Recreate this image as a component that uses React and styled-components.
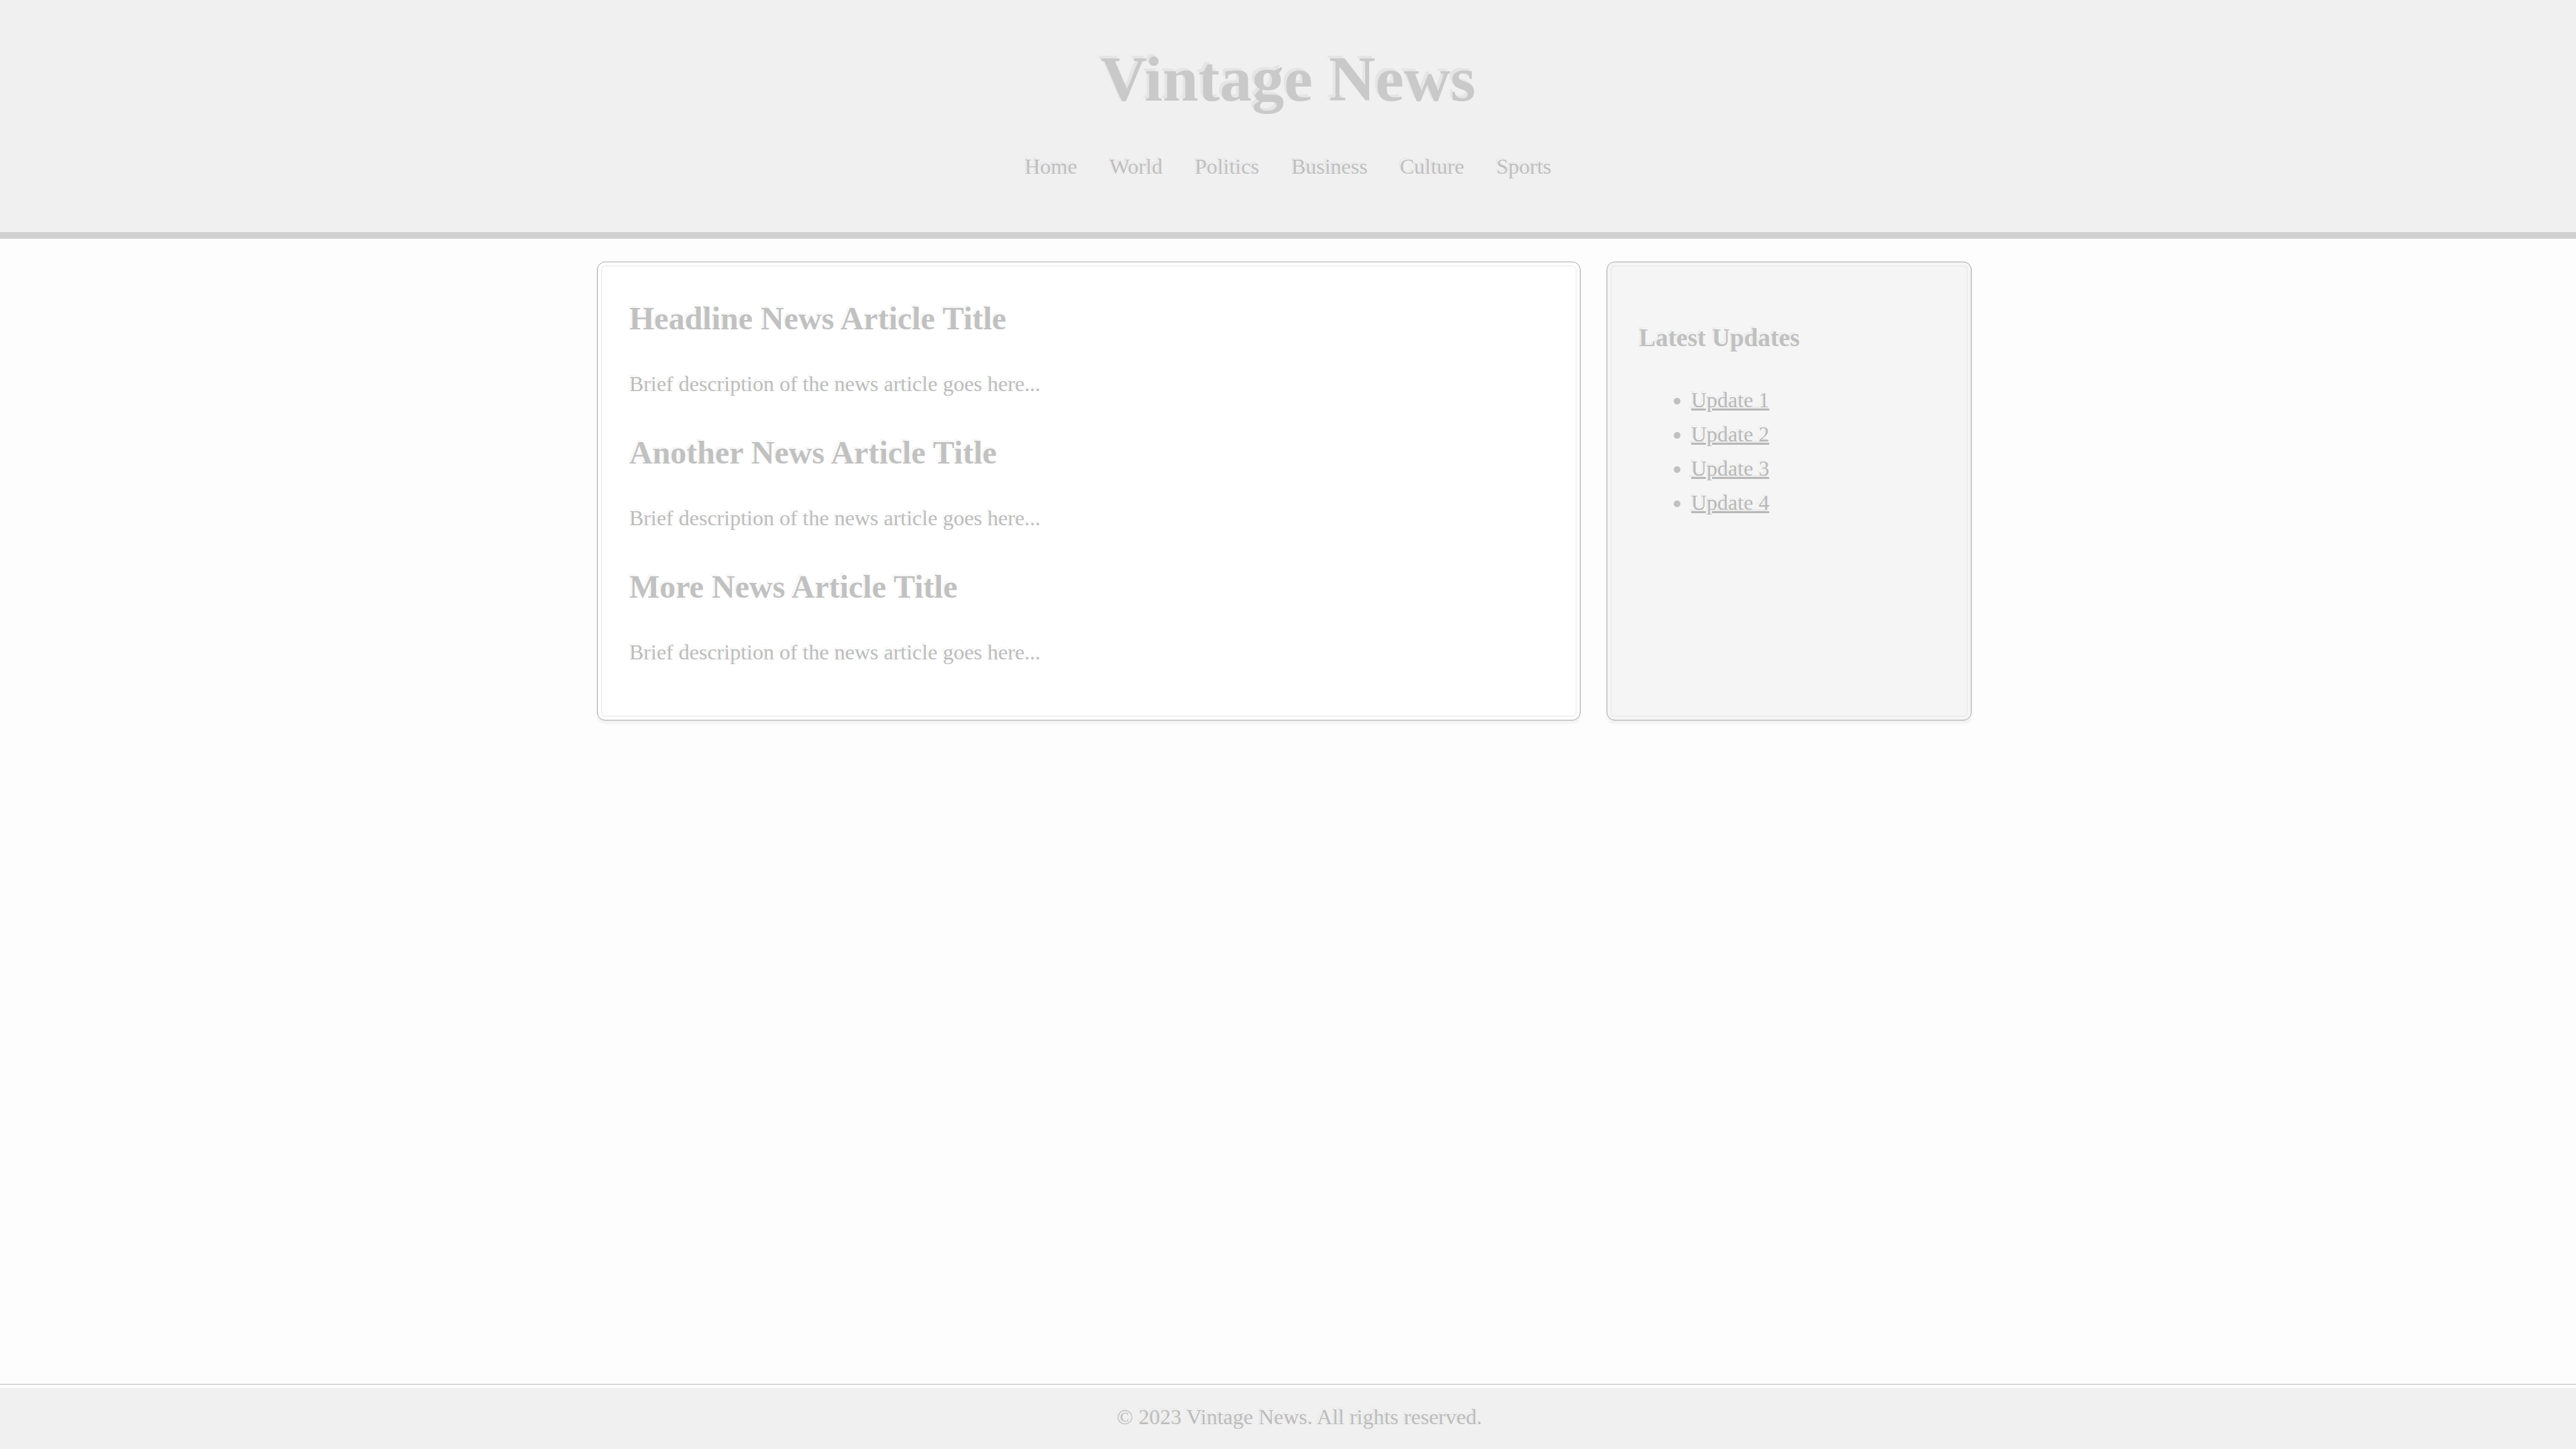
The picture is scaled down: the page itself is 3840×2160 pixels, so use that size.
import React from "react";
import styled, { createGlobalStyle } from "styled-components";

const GlobalStyle = createGlobalStyle`
  *, *::before, *::after { box-sizing: border-box; }
  html, body { margin: 0; padding: 0; background: #fdfdfd; }
  body {
    font-family: "Liberation Serif", "Times New Roman", serif;
    font-size: 32px;
    color: #bdbdbd;
  }
`;

const Page = styled.div`
  min-height: 100vh;
  display: flex;
  flex-direction: column;
`;

const Header = styled.header`
  background: #f0f0f0;
  border-bottom: 10px solid #d0d0d0;
  padding: 62px 0 79px;
  display: flex;
  flex-direction: column;
  align-items: center;
`;

const Title = styled.h1`
  margin: 0;
  font-size: 96px;
  font-weight: 700;
  line-height: normal;
  color: #c9c9c9;
  text-shadow: -4px -4px 0 rgba(0, 0, 0, 0.045);
`;

const Nav = styled.nav`
  margin-top: 57px;
  display: flex;
  gap: 48px;
`;

const NavLink = styled.a`
  font-size: 32px;
  line-height: normal;
  color: #bfbfbf;
  text-decoration: none;
  text-shadow: -3px -3px 0 rgba(0, 0, 0, 0.05);
`;

const Main = styled.main`
  flex: 1;
`;

const Layout = styled.div`
  display: grid;
  grid-template-columns: 1466px 544px;
  column-gap: 39px;
  align-items: stretch;
  margin: 34px 0 0 890px;
`;

const Card = styled.section`
  border: 1px solid #a9a9a9;
  border-radius: 12px;
  background: ${(p) => (p.$tinted ? "#f5f5f5" : "#ffffff")};
  box-shadow: inset 0 0 0 5px ${(p) => (p.$tinted ? "#f5f5f5" : "#ffffff")},
    inset 0 0 0 6px #e6e6e6, 0 4px 5px rgba(0, 0, 0, 0.06);
  padding: ${(p) => p.$pad};
`;

const Article = styled.article`
  & + & { margin-top: 56px; }
`;

const ArticleTitle = styled.h2`
  margin: 0 0 52px;
  font-size: 48px;
  font-weight: 700;
  line-height: normal;
  color: #c1c1c1;
  text-shadow: -3px -3px 0 rgba(0, 0, 0, 0.045);
`;

const ArticleText = styled.p`
  margin: 0;
  font-size: 32px;
  line-height: normal;
  color: #bcbcbc;
  text-shadow: -3px -3px 0 rgba(0, 0, 0, 0.04);
`;

const SideTitle = styled.h3`
  margin: 0 0 53px;
  font-size: 37.4px;
  font-weight: 700;
  line-height: normal;
  color: #c0c0c0;
  text-shadow: -3px -3px 0 rgba(0, 0, 0, 0.045);
`;

const UpdateList = styled.ul`
  margin: 0;
  padding-left: 78px;
  list-style: disc;
  color: #c0c0c0;
`;

const UpdateItem = styled.li`
  font-size: 32px;
  line-height: normal;
  & + & { margin-top: 14px; }
`;

const UpdateLink = styled.a`
  color: #b8b8b8;
  text-decoration: underline;
  text-shadow: -3px -3px 0 rgba(0, 0, 0, 0.04);
`;

const Footer = styled.footer`
  border-top: 1px solid #bbbbbb;
  background: #f0f0f0;
  box-shadow: inset 0 5px 0 #fdfdfd;
  padding: 30px 0 29px 34px;
  text-align: center;
`;

const FooterText = styled.p`
  margin: 0;
  font-size: 32px;
  line-height: normal;
  color: #bcbcbc;
  text-shadow: -3px -3px 0 rgba(0, 0, 0, 0.04);
`;

const navItems = ["Home", "World", "Politics", "Business", "Culture", "Sports"];
const articles = [
  "Headline News Article Title",
  "Another News Article Title",
  "More News Article Title",
];
const updates = ["Update 1", "Update 2", "Update 3", "Update 4"];

export default function App() {
  return (
    <>
      <GlobalStyle />
      <Page>
        <Header>
          <Title>Vintage News</Title>
          <Nav>
            {navItems.map((n) => (
              <NavLink key={n} href="#">
                {n}
              </NavLink>
            ))}
          </Nav>
        </Header>
        <Main>
          <Layout>
            <Card $pad="56px 47px 82px">
              {articles.map((t) => (
                <Article key={t}>
                  <ArticleTitle>{t}</ArticleTitle>
                  <ArticleText>Brief description of the news article goes here...</ArticleText>
                </Article>
              ))}
            </Card>
            <Card $tinted $pad="91px 47px 40px">
              <SideTitle>Latest Updates</SideTitle>
              <UpdateList>
                {updates.map((u) => (
                  <UpdateItem key={u}>
                    <UpdateLink href="#">{u}</UpdateLink>
                  </UpdateItem>
                ))}
              </UpdateList>
            </Card>
          </Layout>
        </Main>
        <Footer>
          <FooterText>© 2023 Vintage News. All rights reserved.</FooterText>
        </Footer>
      </Page>
    </>
  );
}
